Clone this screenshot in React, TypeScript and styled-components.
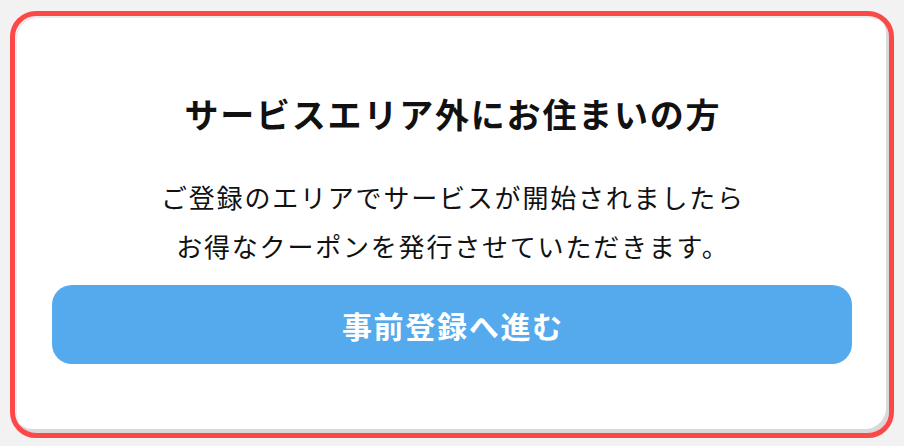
import React from "react";
import styled, { createGlobalStyle } from "styled-components";

const GlobalStyle = createGlobalStyle`
  html, body {
    margin: 0;
    padding: 0;
    background: #f2f2f2;
  }
  body {
    font-family: "Noto Sans CJK JP", "Noto Sans", sans-serif;
    color: #111;
  }
`;

const Page = styled.div`
  display: flex;
  justify-content: flex-start;
  padding: 11px 10px 8px 10px;
`;

const Card = styled.section`
  box-sizing: border-box;
  width: 884px;
  height: 427px;
  border: 5px solid #fd4848;
  border-radius: 26px;
  background: #ffffff;
  box-shadow: inset 2px 2px 0 #ececec, inset -3px -4px 0 #d9d9d9;
  display: flex;
  flex-direction: column;
  align-items: center;
  padding: 75px 37px 0 37px;
`;

const Title = styled.h2`
  margin: 0;
  font-size: 34px;
  line-height: 45px;
  font-weight: 700;
  letter-spacing: 1.8px;
  padding-left: 1.8px;
  color: #111;
`;

const Lead = styled.p`
  margin: 36px 0 0 0;
  font-size: 26px;
  line-height: 49px;
  font-weight: 400;
  letter-spacing: 1.8px;
  padding-left: 1.8px;
  text-align: center;
  color: #111;
`;

const Line = styled.span`
  display: block;
`;

const ActionButton = styled.button`
  box-sizing: border-box;
  margin-top: 15px;
  width: 800px;
  height: 79px;
  border: none;
  border-radius: 20px;
  background: #55aaee;
  color: #ffffff;
  font-family: "Noto Sans CJK JP", "Noto Sans", sans-serif;
  font-size: 30px;
  font-weight: 700;
  letter-spacing: 1.7px;
  padding: 0 0 0 1.7px;
  cursor: pointer;
`;

export default function App() {
  return (
    <>
      <GlobalStyle />
      <Page>
        <Card>
          <Title>サービスエリア外にお住まいの方</Title>
          <Lead>
            <Line>ご登録のエリアでサービスが開始されましたら</Line>
            <Line>お得なクーポンを発行させていただきます。</Line>
          </Lead>
          <ActionButton type="button">事前登録へ進む</ActionButton>
        </Card>
      </Page>
    </>
  );
}
